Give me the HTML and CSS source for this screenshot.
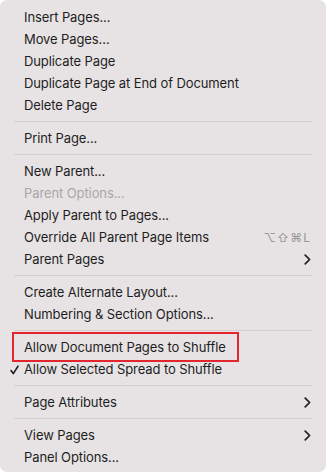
FILE: index.html
```html
<!DOCTYPE html>
<html>
<head>
<meta charset="utf-8">
<link rel="stylesheet" href="styles.css">
</head>
<body>
<div class="menu">
  <div class="item">Insert Pages...</div>
  <div class="item">Move Pages...</div>
  <div class="item">Duplicate Page</div>
  <div class="item">Duplicate Page at End of Document</div>
  <div class="item">Delete Page</div>
  <div class="sep"></div>
  <div class="item">Print Page...</div>
  <div class="sep"></div>
  <div class="item">New Parent...</div>
  <div class="item disabled">Parent Options...</div>
  <div class="item">Apply Parent to Pages...</div>
  <div class="item"><span class="label">Override All Parent Page Items</span><span class="shortcut">⌥⇧⌘L</span></div>
  <div class="item"><span class="label">Parent Pages</span><svg class="chev" width="7" height="11" viewBox="0 0 7 11"><path d="M1.2 1.2 L5.6 5.5 L1.2 9.8" fill="none" stroke="#1e1e1e" stroke-width="1.7" stroke-linecap="round" stroke-linejoin="round"/></svg></div>
  <div class="sep"></div>
  <div class="item">Create Alternate Layout...</div>
  <div class="item">Numbering &amp; Section Options...</div>
  <div class="sep"></div>
  <div class="item highlighted"><span class="box">Allow Document Pages to Shuffle</span></div>
  <div class="item"><svg class="check" width="9" height="10" viewBox="0 0 9 10"><path d="M1 5.6 L3.3 8.6 L8 1.2" fill="none" stroke="#1e1e1e" stroke-width="1.6" stroke-linecap="round" stroke-linejoin="round"/></svg>Allow Selected Spread to Shuffle</div>
  <div class="sep"></div>
  <div class="item"><span class="label">Page Attributes</span><svg class="chev" width="7" height="11" viewBox="0 0 7 11"><path d="M1.2 1.2 L5.6 5.5 L1.2 9.8" fill="none" stroke="#1e1e1e" stroke-width="1.7" stroke-linecap="round" stroke-linejoin="round"/></svg></div>
  <div class="sep"></div>
  <div class="item"><span class="label">View Pages</span><svg class="chev" width="7" height="11" viewBox="0 0 7 11"><path d="M1.2 1.2 L5.6 5.5 L1.2 9.8" fill="none" stroke="#1e1e1e" stroke-width="1.7" stroke-linecap="round" stroke-linejoin="round"/></svg></div>
  <div class="item">Panel Options...</div>
</div>
</body>
</html>
```
FILE: styles.css
```css
html, body {
  margin: 0;
  padding: 0;
  background: #ffffff;
}
.menu {
  width: 326px;
  height: 472px;
  box-sizing: border-box;
  background: #e7e3e4;
  border-radius: 7px;
  padding: 6px 0 0 0;
  font-family: Inter, "Liberation Sans", sans-serif;
  font-size: 13px;
  letter-spacing: -0.1px;
  color: #1f1e1e;
}
.item {
  position: relative;
  height: 22px;
  display: flex;
  align-items: center;
  padding: 0 15px 0 24px;
  white-space: nowrap;
}
.label {
  flex: 1;
}
.disabled {
  color: #a9a6a7;
}
.shortcut {
  color: #9a9798;
  font-size: 12px;
  letter-spacing: 1px;
}
.chev {
  display: block;
}
.sep {
  height: 11px;
  display: flex;
  align-items: center;
  padding: 0 14px;
}
.sep::before {
  content: "";
  flex: 1;
  height: 1px;
  background: #d3cfd0;
}
.check {
  position: absolute;
  left: 10px;
  top: 7px;
}
.box {
  position: relative;
}
.box::after {
  content: "";
  position: absolute;
  left: -12px;
  right: -13px;
  top: -7px;
  bottom: -7px;
  border: 2px solid #e3262e;
}
```
